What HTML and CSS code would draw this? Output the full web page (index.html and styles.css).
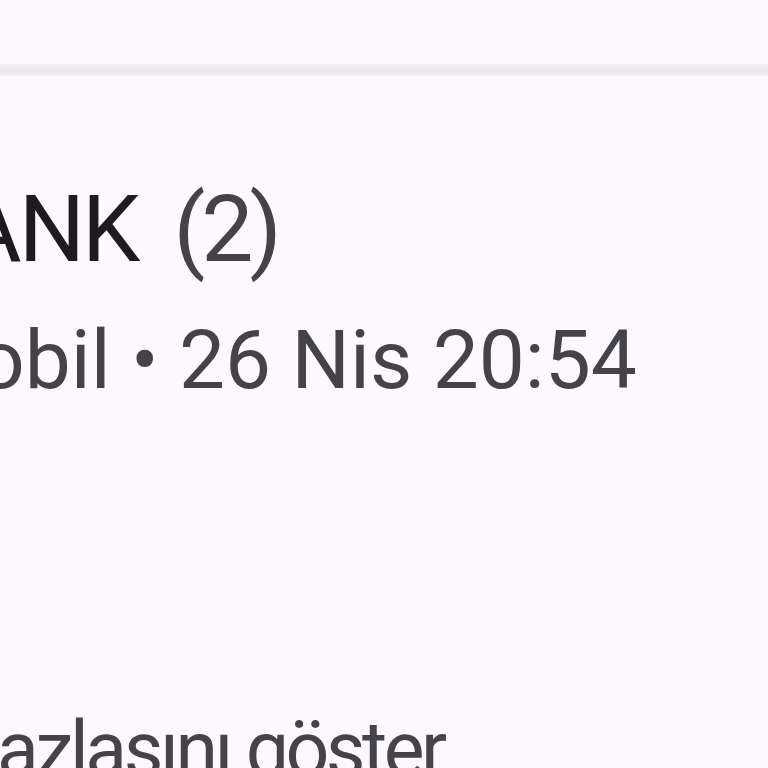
FILE: index.html
```html
<!DOCTYPE html>
<html>
<head>
<meta charset="utf-8">
<link rel="stylesheet" href="styles.css">
</head>
<body>
<div class="page">
  <div class="top"></div>
  <div class="divider"></div>
  <div class="card">
    <div class="title"><span class="name">ANK</span><span class="count">(2)</span></div>
    <div class="meta">obil • 26 Nis 20:54</div>
    <div class="more">azlasını göster</div>
  </div>
</div>
</body>
</html>
```
FILE: styles.css
```css
html, body {
  margin: 0;
  padding: 0;
  background: #fdf8fd;
}
.page {
  width: 768px;
  height: 768px;
  overflow: hidden;
  font-family: Roboto, "Noto Sans", sans-serif;
  background: #fdf8fd;
}
.top {
  height: 64px;
}
.divider {
  height: 12px;
  background: linear-gradient(#f6f1f6 0%, #eee9ee 40%, #ece7ec 70%, #f6f1f6 100%);
}
.card {
  padding-top: 99px;
  white-space: nowrap;
}
.title {
  display: flex;
  align-items: baseline;
  gap: 36px;
  font-size: 93px;
  line-height: 110px;
  height: 110px;
  color: #1d1b20;
  margin-left: -39px;
}
.name {
  letter-spacing: -3px;
}
.count {
  color: #45434a;
  font-size: 93px;
  letter-spacing: -4px;
}
.meta {
  margin-top: 25px;
  font-size: 82px;
  line-height: 100px;
  height: 100px;
  color: #45434a;
  margin-left: -22px;
}
.more {
  margin-top: 290px;
  font-size: 77px;
  line-height: 100px;
  height: 100px;
  color: #45434a;
  letter-spacing: -3.5px;
  margin-left: -3px;
}
```
